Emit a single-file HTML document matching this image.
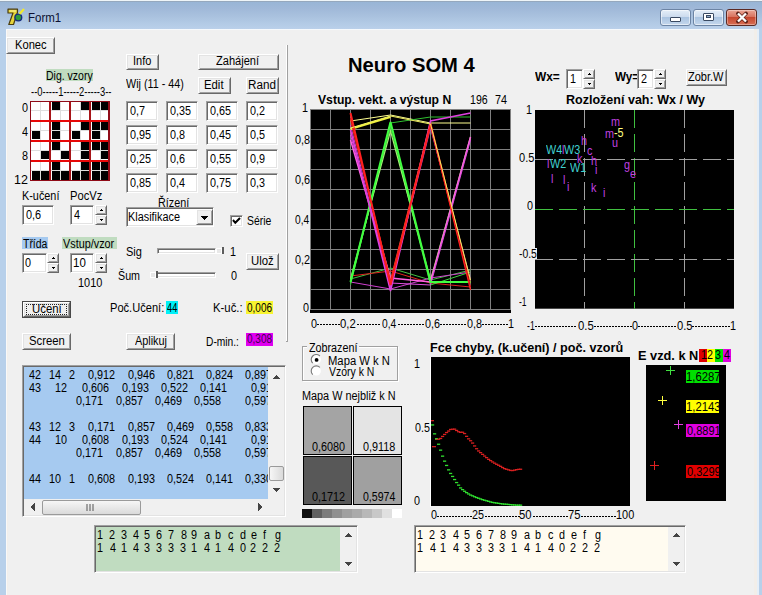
<!DOCTYPE html>
<html><head><meta charset="utf-8"><style>
html,body{margin:0;padding:0;}
body{width:762px;height:595px;overflow:hidden;position:relative;background:#b8d0ea;font-family:"Liberation Sans", sans-serif;}
.t{position:absolute;white-space:pre;color:#000;}
.b{position:absolute;box-sizing:border-box;}
.btn{position:absolute;box-sizing:border-box;background:#f0f0f0;border:1px solid;border-color:#fff #696969 #696969 #fff;box-shadow:inset 1px 1px #e3e3e3, inset -1px -1px #a0a0a0;}
.ed{position:absolute;box-sizing:border-box;border:1px solid;border-color:#a0a0a0 #fff #fff #a0a0a0;box-shadow:inset 1px 1px #696969, inset -1px -1px #e3e3e3;}
</style></head><body>
<div class="b" style="left:0px;top:0px;width:762px;height:29px;background:linear-gradient(#98b5d6 2px,#9fb8d8 8px,#a9c1de 16px,#b2cae5 23px,#bad0ea 29px)"></div>
<div class="b" style="left:0px;top:0px;width:762px;height:1px;background:#eef5f8"></div>
<div class="b" style="left:0px;top:1px;width:762px;height:1px;background:#95a8bd"></div>
<svg class="b" style="left:6px;top:8px" width="20" height="18" viewBox="0 0 20 18">
<path d="M2 1.2 L11.5 1.2 L11.5 4.2 L7.5 16.5 L2.8 16.5 L7 5 L2 5 Z" fill="#e6d43a" stroke="#4a3c10" stroke-width="1.2" stroke-linejoin="round"/>
<path d="M3.5 3 L10 3" stroke="#fff7a0" stroke-width="1"/>
<circle cx="12.3" cy="9.5" r="3.4" fill="#2f9a3a" stroke="#162a80" stroke-width="1.4"/>
<path d="M13.5 6 L18 1" stroke="#f0e830" stroke-width="2.2"/>
</svg>
<div class="t" style="left:27.52px;top:11px;font-size:13px;line-height:13px;color:#0c1030;transform:scaleX(0.8833);transform-origin:0 0;">Form1</div>
<div class="b" style="left:660px;top:9px;width:31px;height:17px;border:1px solid #6c84a4;border-radius:3px;background:linear-gradient(#e4eef8 0%,#cddcee 45%,#aac4e1 50%,#c4d7ec 100%);box-shadow:inset 0 0 0 1px rgba(255,255,255,0.55)"></div>
<div class="b" style="left:693px;top:9px;width:31px;height:17px;border:1px solid #6c84a4;border-radius:3px;background:linear-gradient(#e4eef8 0%,#cddcee 45%,#aac4e1 50%,#c4d7ec 100%);box-shadow:inset 0 0 0 1px rgba(255,255,255,0.55)"></div>
<div class="b" style="left:726px;top:9px;width:31px;height:17px;border:1px solid #5b2a24;border-radius:3px;background:linear-gradient(#eaa595 0%,#d8735f 45%,#c6472f 50%,#d86f55 100%);box-shadow:inset 0 0 0 1px rgba(255,255,255,0.35)"></div>
<div class="b" style="left:670px;top:17px;width:11px;height:5px;background:#fff;border:1px solid #3a4a62;border-radius:1px"></div>
<div class="b" style="left:703px;top:13px;width:11px;height:8px;background:#fff;border:1px solid #3a4a62;border-radius:1px"></div>
<div class="b" style="left:706px;top:15px;width:5px;height:3px;background:#8ea6c4;border:1px solid #3a4a62"></div>
<svg class="b" style="left:734px;top:11px" width="16" height="13" viewBox="0 0 16 13"><path d="M4 2.5 L12 10.5 M12 2.5 L4 10.5" stroke="#5a2018" stroke-width="3.8" stroke-linecap="round"/><path d="M4 2.5 L12 10.5 M12 2.5 L4 10.5" stroke="#fff" stroke-width="2.4"/></svg>
<div class="b" style="left:6px;top:29px;width:748px;height:566px;background:#f0f0f0"></div>
<div class="b" style="left:6px;top:29px;width:1px;height:566px;background:#f9f9f9"></div>
<div class="b" style="left:7px;top:29px;width:1px;height:566px;background:#f3efeb"></div>
<div class="b" style="left:754px;top:29px;width:3px;height:566px;background:#f2eee9"></div>
<div class="b" style="left:757px;top:29px;width:2px;height:566px;background:#e6eff8"></div>
<div class="b" style="left:6px;top:29px;width:748px;height:1px;background:#f6f9fc"></div>
<div class="btn" style="left:6px;top:37px;width:49px;height:17px"></div>
<div class="t" style="left:14.57px;top:39px;font-size:12px;line-height:12px;transform:scaleX(0.9303);transform-origin:0 0;">Konec</div>
<div class="b" style="left:46px;top:69px;width:47px;height:12px;background:#c0dcc0"></div>
<div class="t" style="left:46.12px;top:70px;font-size:12px;line-height:12px;transform:scaleX(0.8750);transform-origin:0 0;">Dig. vzory</div>
<div class="t" style="left:31.00px;top:86px;font-size:12px;line-height:12px;transform:scaleX(0.7843);transform-origin:0 0;">--0-----1-----2-----3--</div>
<div class="b" style="left:30px;top:101px;width:80px;height:80px;background:#fff"></div>
<div class="b" style="left:40px;top:102px;width:1px;height:78px;background:#dedede"></div>
<div class="b" style="left:31px;top:110px;width:77px;height:1px;background:#dedede"></div>
<div class="b" style="left:60px;top:102px;width:1px;height:78px;background:#dedede"></div>
<div class="b" style="left:31px;top:130px;width:77px;height:1px;background:#dedede"></div>
<div class="b" style="left:80px;top:102px;width:1px;height:78px;background:#dedede"></div>
<div class="b" style="left:31px;top:150px;width:77px;height:1px;background:#dedede"></div>
<div class="b" style="left:100px;top:102px;width:1px;height:78px;background:#dedede"></div>
<div class="b" style="left:31px;top:170px;width:77px;height:1px;background:#dedede"></div>
<div class="b" style="left:52px;top:102px;width:8px;height:8px;background:#000"></div>
<div class="b" style="left:81px;top:102px;width:8px;height:8px;background:#000"></div>
<div class="b" style="left:92px;top:102px;width:8px;height:8px;background:#000"></div>
<div class="b" style="left:101px;top:102px;width:7px;height:8px;background:#000"></div>
<div class="b" style="left:32px;top:131px;width:8px;height:8px;background:#000"></div>
<div class="b" style="left:52px;top:122px;width:8px;height:8px;background:#000"></div>
<div class="b" style="left:52px;top:131px;width:8px;height:8px;background:#000"></div>
<div class="b" style="left:81px;top:122px;width:8px;height:8px;background:#000"></div>
<div class="b" style="left:72px;top:131px;width:8px;height:8px;background:#000"></div>
<div class="b" style="left:92px;top:122px;width:8px;height:8px;background:#000"></div>
<div class="b" style="left:101px;top:122px;width:7px;height:8px;background:#000"></div>
<div class="b" style="left:92px;top:131px;width:8px;height:8px;background:#000"></div>
<div class="b" style="left:41px;top:151px;width:8px;height:8px;background:#000"></div>
<div class="b" style="left:52px;top:142px;width:8px;height:8px;background:#000"></div>
<div class="b" style="left:61px;top:151px;width:8px;height:8px;background:#000"></div>
<div class="b" style="left:81px;top:142px;width:8px;height:8px;background:#000"></div>
<div class="b" style="left:81px;top:151px;width:8px;height:8px;background:#000"></div>
<div class="b" style="left:92px;top:142px;width:8px;height:8px;background:#000"></div>
<div class="b" style="left:101px;top:142px;width:7px;height:8px;background:#000"></div>
<div class="b" style="left:101px;top:151px;width:7px;height:8px;background:#000"></div>
<div class="b" style="left:32px;top:171px;width:8px;height:9px;background:#000"></div>
<div class="b" style="left:41px;top:171px;width:8px;height:9px;background:#000"></div>
<div class="b" style="left:52px;top:162px;width:8px;height:8px;background:#000"></div>
<div class="b" style="left:52px;top:171px;width:8px;height:9px;background:#000"></div>
<div class="b" style="left:61px;top:171px;width:8px;height:9px;background:#000"></div>
<div class="b" style="left:81px;top:162px;width:8px;height:8px;background:#000"></div>
<div class="b" style="left:72px;top:171px;width:8px;height:9px;background:#000"></div>
<div class="b" style="left:81px;top:171px;width:8px;height:9px;background:#000"></div>
<div class="b" style="left:92px;top:162px;width:8px;height:8px;background:#000"></div>
<div class="b" style="left:101px;top:162px;width:7px;height:8px;background:#000"></div>
<div class="b" style="left:92px;top:171px;width:8px;height:9px;background:#000"></div>
<div class="b" style="left:101px;top:171px;width:7px;height:9px;background:#000"></div>
<div class="b" style="left:49px;top:101px;width:2px;height:80px;background:#a81418"></div>
<div class="b" style="left:69px;top:101px;width:2px;height:80px;background:#a81418"></div>
<div class="b" style="left:89px;top:101px;width:2px;height:80px;background:#a81418"></div>
<div class="b" style="left:30px;top:120px;width:80px;height:2px;background:#e80808"></div>
<div class="b" style="left:30px;top:140px;width:80px;height:2px;background:#e80808"></div>
<div class="b" style="left:30px;top:160px;width:80px;height:2px;background:#e80808"></div>
<div class="b" style="left:30px;top:101px;width:1px;height:80px;background:#900c18"></div>
<div class="b" style="left:30px;top:101px;width:80px;height:1px;background:#900c18"></div>
<div class="b" style="left:108px;top:101px;width:2px;height:80px;background:#900c18"></div>
<div class="b" style="left:30px;top:180px;width:80px;height:1px;background:#900c18"></div>
<div class="t" style="left:22.40px;top:102px;font-size:12px;line-height:12px;transform:scaleX(0.9);transform-origin:0 0;">0</div>
<div class="t" style="left:22.40px;top:126px;font-size:12px;line-height:12px;transform:scaleX(0.9);transform-origin:0 0;">4</div>
<div class="t" style="left:22.40px;top:150px;font-size:12px;line-height:12px;transform:scaleX(0.9);transform-origin:0 0;">8</div>
<div class="t" style="left:14.26px;top:174px;font-size:12px;line-height:12px;transform:scaleX(1.0417);transform-origin:0 0;">12</div>
<div class="t" style="left:21.70px;top:190px;font-size:12px;line-height:12px;transform:scaleX(0.9050);transform-origin:0 0;">K-učení</div>
<div class="t" style="left:69.67px;top:190px;font-size:12px;line-height:12px;transform:scaleX(0.9303);transform-origin:0 0;">PocVz</div>
<div class="ed" style="left:22px;top:205px;width:32px;height:20px;background:#fff"></div>
<div class="t" style="left:25.70px;top:209px;font-size:12px;line-height:12px;transform:scaleX(0.9062);transform-origin:0 0;">0,6</div>
<div class="ed" style="left:70px;top:205px;width:24px;height:20px;background:#fff"></div>
<div class="t" style="left:73.80px;top:209px;font-size:12px;line-height:12px;transform:scaleX(0.9);transform-origin:0 0;">4</div>
<div class="btn" style="left:95px;top:205px;width:12px;height:10px"></div>
<svg class="b" style="left:95px;top:205px" width="12" height="10"><path d="M5 5h3v1h-3z M6 4h1v1h-1z" fill="#000"/></svg>
<div class="btn" style="left:95px;top:215px;width:12px;height:10px"></div>
<svg class="b" style="left:95px;top:215px" width="12" height="10"><path d="M5 4h3v1h-3z M6 5h1v1h-1z" fill="#000"/></svg>
<div class="b" style="left:22px;top:237px;width:26px;height:12px;background:#a6caf0"></div>
<div class="t" style="left:23.40px;top:238px;font-size:12px;line-height:12px;transform:scaleX(0.8714);transform-origin:0 0;">Třída</div>
<div class="b" style="left:62px;top:237px;width:55px;height:12px;background:#c0dcc0"></div>
<div class="t" style="left:62.80px;top:238px;font-size:12px;line-height:12px;transform:scaleX(0.9035);transform-origin:0 0;">Vstup/vzor</div>
<div class="ed" style="left:22px;top:253px;width:25px;height:20px;background:#fff"></div>
<div class="t" style="left:25.30px;top:257px;font-size:12px;line-height:12px;transform:scaleX(0.9);transform-origin:0 0;">0</div>
<div class="btn" style="left:47px;top:253px;width:12px;height:10px"></div>
<svg class="b" style="left:47px;top:253px" width="12" height="10"><path d="M5 5h3v1h-3z M6 4h1v1h-1z" fill="#000"/></svg>
<div class="btn" style="left:47px;top:263px;width:12px;height:10px"></div>
<svg class="b" style="left:47px;top:263px" width="12" height="10"><path d="M5 4h3v1h-3z M6 5h1v1h-1z" fill="#000"/></svg>
<div class="ed" style="left:70px;top:253px;width:24px;height:20px;background:#fff"></div>
<div class="t" style="left:72.84px;top:257px;font-size:12px;line-height:12px;transform:scaleX(0.9583);transform-origin:0 0;">10</div>
<div class="btn" style="left:95px;top:253px;width:12px;height:10px"></div>
<svg class="b" style="left:95px;top:253px" width="12" height="10"><path d="M5 5h3v1h-3z M6 4h1v1h-1z" fill="#000"/></svg>
<div class="btn" style="left:95px;top:263px;width:12px;height:10px"></div>
<svg class="b" style="left:95px;top:263px" width="12" height="10"><path d="M5 4h3v1h-3z M6 5h1v1h-1z" fill="#000"/></svg>
<div class="t" style="left:78.39px;top:277px;font-size:12px;line-height:12px;transform:scaleX(0.9120);transform-origin:0 0;">1010</div>
<div class="b" style="left:22px;top:301px;width:49px;height:17px;background:#484848"></div>
<div class="btn" style="left:23px;top:302px;width:47px;height:15px"></div>
<div class="t" style="left:31.55px;top:303px;font-size:12px;line-height:12px;transform:scaleX(0.9500);transform-origin:0 0;">Učení</div>
<div class="b" style="left:26px;top:304px;width:41px;height:11px;border:1px dotted #222"></div>
<div class="btn" style="left:22px;top:333px;width:49px;height:17px"></div>
<div class="t" style="left:28.56px;top:335px;font-size:12px;line-height:12px;transform:scaleX(0.9417);transform-origin:0 0;">Screen</div>
<div class="btn" style="left:126px;top:54px;width:33px;height:16px"></div>
<div class="t" style="left:132.88px;top:55px;font-size:12px;line-height:12px;transform:scaleX(0.9158);transform-origin:0 0;">Info</div>
<div class="btn" style="left:198px;top:54px;width:81px;height:16px"></div>
<div class="t" style="left:216.40px;top:55px;font-size:12px;line-height:12px;transform:scaleX(0.9217);transform-origin:0 0;">Zahájení</div>
<div class="t" style="left:126.20px;top:78px;font-size:12px;line-height:12px;transform:scaleX(0.8969);transform-origin:0 0;">Wij (11 - 44)</div>
<div class="btn" style="left:198px;top:77px;width:33px;height:17px"></div>
<div class="t" style="left:203.86px;top:79px;font-size:12px;line-height:12px;transform:scaleX(0.9450);transform-origin:0 0;">Edit</div>
<div class="btn" style="left:246px;top:77px;width:33px;height:17px"></div>
<div class="t" style="left:248.43px;top:79px;font-size:12px;line-height:12px;transform:scaleX(0.9741);transform-origin:0 0;">Rand</div>
<div class="ed" style="left:126px;top:101px;width:32px;height:20px;background:#fff"></div>
<div class="t" style="left:129.70px;top:105px;font-size:12px;line-height:12px;transform:scaleX(0.9);transform-origin:0 0;">0,7</div>
<div class="ed" style="left:166px;top:101px;width:32px;height:20px;background:#fff"></div>
<div class="t" style="left:169.70px;top:105px;font-size:12px;line-height:12px;transform:scaleX(0.9);transform-origin:0 0;">0,35</div>
<div class="ed" style="left:206px;top:101px;width:32px;height:20px;background:#fff"></div>
<div class="t" style="left:209.70px;top:105px;font-size:12px;line-height:12px;transform:scaleX(0.9);transform-origin:0 0;">0,65</div>
<div class="ed" style="left:246px;top:101px;width:32px;height:20px;background:#fff"></div>
<div class="t" style="left:249.70px;top:105px;font-size:12px;line-height:12px;transform:scaleX(0.9);transform-origin:0 0;">0,2</div>
<div class="ed" style="left:126px;top:125px;width:32px;height:20px;background:#fff"></div>
<div class="t" style="left:129.70px;top:129px;font-size:12px;line-height:12px;transform:scaleX(0.9);transform-origin:0 0;">0,95</div>
<div class="ed" style="left:166px;top:125px;width:32px;height:20px;background:#fff"></div>
<div class="t" style="left:169.70px;top:129px;font-size:12px;line-height:12px;transform:scaleX(0.9);transform-origin:0 0;">0,8</div>
<div class="ed" style="left:206px;top:125px;width:32px;height:20px;background:#fff"></div>
<div class="t" style="left:209.70px;top:129px;font-size:12px;line-height:12px;transform:scaleX(0.9);transform-origin:0 0;">0,45</div>
<div class="ed" style="left:246px;top:125px;width:32px;height:20px;background:#fff"></div>
<div class="t" style="left:249.70px;top:129px;font-size:12px;line-height:12px;transform:scaleX(0.9);transform-origin:0 0;">0,5</div>
<div class="ed" style="left:126px;top:149px;width:32px;height:20px;background:#fff"></div>
<div class="t" style="left:129.70px;top:153px;font-size:12px;line-height:12px;transform:scaleX(0.9);transform-origin:0 0;">0,25</div>
<div class="ed" style="left:166px;top:149px;width:32px;height:20px;background:#fff"></div>
<div class="t" style="left:169.70px;top:153px;font-size:12px;line-height:12px;transform:scaleX(0.9);transform-origin:0 0;">0,6</div>
<div class="ed" style="left:206px;top:149px;width:32px;height:20px;background:#fff"></div>
<div class="t" style="left:209.70px;top:153px;font-size:12px;line-height:12px;transform:scaleX(0.9);transform-origin:0 0;">0,55</div>
<div class="ed" style="left:246px;top:149px;width:32px;height:20px;background:#fff"></div>
<div class="t" style="left:249.70px;top:153px;font-size:12px;line-height:12px;transform:scaleX(0.9);transform-origin:0 0;">0,9</div>
<div class="ed" style="left:126px;top:173px;width:32px;height:20px;background:#fff"></div>
<div class="t" style="left:129.70px;top:177px;font-size:12px;line-height:12px;transform:scaleX(0.9);transform-origin:0 0;">0,85</div>
<div class="ed" style="left:166px;top:173px;width:32px;height:20px;background:#fff"></div>
<div class="t" style="left:169.70px;top:177px;font-size:12px;line-height:12px;transform:scaleX(0.9);transform-origin:0 0;">0,4</div>
<div class="ed" style="left:206px;top:173px;width:32px;height:20px;background:#fff"></div>
<div class="t" style="left:209.70px;top:177px;font-size:12px;line-height:12px;transform:scaleX(0.9);transform-origin:0 0;">0,75</div>
<div class="ed" style="left:246px;top:173px;width:32px;height:20px;background:#fff"></div>
<div class="t" style="left:249.70px;top:177px;font-size:12px;line-height:12px;transform:scaleX(0.9);transform-origin:0 0;">0,3</div>
<div class="t" style="left:158.10px;top:197px;font-size:12px;line-height:12px;transform:scaleX(0.9000);transform-origin:0 0;">Řízení</div>
<div class="ed" style="left:126px;top:207px;width:88px;height:20px;background:#fff"></div>
<div class="t" style="left:128.49px;top:211px;font-size:12px;line-height:12px;transform:scaleX(0.9071);transform-origin:0 0;">Klasifikace</div>
<div class="btn" style="left:196px;top:209px;width:17px;height:16px"></div>
<svg class="b" style="left:196px;top:209px" width="17" height="16"><path d="M5 7h7v1h-7z M6 8h5v1h-5z M7 9h3v1h-3z M8 10h1v1h-1z" fill="#000"/></svg>
<div class="ed" style="left:230px;top:215px;width:13px;height:12px;background:#fff"></div>
<svg class="b" style="left:230px;top:215px" width="13" height="12"><path d="M3 5 L5.3 7.8 L10 3" stroke="#000" stroke-width="2" fill="none"/></svg>
<div class="t" style="left:247.43px;top:215px;font-size:12px;line-height:12px;transform:scaleX(0.8667);transform-origin:0 0;">Série</div>
<div class="t" style="left:125.58px;top:246px;font-size:12px;line-height:12px;transform:scaleX(0.9187);transform-origin:0 0;">Sig</div>
<div class="ed" style="left:157px;top:248px;width:59px;height:6px;background:#fff"></div>
<div class="b" style="left:216px;top:248px;width:6px;height:6px;background:#e8e8e8;border:1px solid #fff"></div>
<div class="b" style="left:222px;top:247px;width:2px;height:7px;background:#5c5c5c"></div>
<div class="t" style="left:230.10px;top:246px;font-size:12px;line-height:12px;transform:scaleX(0.9);transform-origin:0 0;">1</div>
<div class="t" style="left:118.11px;top:270px;font-size:12px;line-height:12px;transform:scaleX(0.8913);transform-origin:0 0;">Šum</div>
<div class="ed" style="left:156px;top:272px;width:60px;height:6px;background:#fff"></div>
<div class="b" style="left:150px;top:272px;width:6px;height:6px;background:#e8e8e8;border:1px solid #fff"></div>
<div class="b" style="left:156px;top:271px;width:2px;height:7px;background:#5c5c5c"></div>
<div class="t" style="left:230.50px;top:270px;font-size:12px;line-height:12px;transform:scaleX(0.9);transform-origin:0 0;">0</div>
<div class="btn" style="left:246px;top:253px;width:33px;height:17px"></div>
<div class="t" style="left:250.75px;top:255px;font-size:12px;line-height:12px;transform:scaleX(0.9478);transform-origin:0 0;">Ulož</div>
<div class="t" style="left:109.98px;top:302px;font-size:12px;line-height:12px;transform:scaleX(0.9246);transform-origin:0 0;">Poč.Učení:</div>
<div class="b" style="left:166px;top:301px;width:12px;height:13px;background:#00f0f8"></div>
<div class="t" style="left:167.00px;top:302px;font-size:12px;line-height:12px;transform:scaleX(0.7692);transform-origin:0 0;">44</div>
<div class="t" style="left:213.16px;top:302px;font-size:12px;line-height:12px;transform:scaleX(0.9448);transform-origin:0 0;">K-uč.:</div>
<div class="b" style="left:246px;top:301px;width:27px;height:13px;background:#f8f430"></div>
<div class="t" style="left:247.00px;top:302px;font-size:12px;line-height:12px;transform:scaleX(0.8333);transform-origin:0 0;">0,006</div>
<div class="btn" style="left:126px;top:333px;width:49px;height:17px"></div>
<div class="t" style="left:135.20px;top:335px;font-size:12px;line-height:12px;transform:scaleX(0.9057);transform-origin:0 0;">Aplikuj</div>
<div class="t" style="left:206.15px;top:336px;font-size:12px;line-height:12px;transform:scaleX(0.8514);transform-origin:0 0;">D-min.:</div>
<div class="b" style="left:246px;top:333px;width:27px;height:13px;background:#e000f0"></div>
<div class="t" style="left:247.00px;top:333px;font-size:12px;line-height:12px;color:#400050;transform:scaleX(0.8333);transform-origin:0 0;">0,308</div>
<div class="b" style="left:286px;top:45px;width:1px;height:297px;background:#fff"></div>
<div class="b" style="left:287px;top:45px;width:1px;height:297px;background:#a0a0a0"></div>
<div class="b" style="left:286px;top:341px;width:2px;height:1px;background:#a0a0a0"></div>
<div class="ed" style="left:22px;top:365px;width:264px;height:152px;background:#a6caf0"></div>
<div class="b" style="left:268px;top:367px;width:16px;height:132px;background:#f0f0f0"></div>
<div class="b" style="left:24px;top:499px;width:244px;height:16px;background:#f0f0f0"></div>
<div class="b" style="left:268px;top:499px;width:16px;height:16px;background:#f0f0f0"></div>
<div class="b" style="left:269px;top:466px;width:15px;height:15px;border:1px solid #9a9a9a;background:linear-gradient(90deg,#f6f6f6,#dadada);border-radius:2px"></div>
<div class="b" style="left:42px;top:500px;width:99px;height:15px;border:1px solid #9a9a9a;background:linear-gradient(#f6f6f6,#dadada);border-radius:2px"></div>
<svg class="b" style="left:86px;top:504px" width="10" height="7"><path d="M1 0v7M4 0v7M7 0v7" stroke="#555" stroke-width="1"/></svg>
<svg class="b" style="left:268px;top:367px" width="16" height="148"><path d="M5 11h7v1h-7z M6 10h5v1h-5z M7 9h3v1h-3z M8 8h1v1h-1z" fill="#444"/><path d="M5 121h7v1h-7z M6 122h5v1h-5z M7 123h3v1h-3z M8 124h1v1h-1z" fill="#444"/></svg>
<svg class="b" style="left:24px;top:499px" width="244" height="16"><path d="M10 4v8h1v-8z M9 5v6h1v-6z M8 6v4h1v-4z M7 7v2h1v-2z" fill="#444"/><path d="M234 4v8h1v-8z M235 5v6h1v-6z M236 6v4h1v-4z M237 7v2h1v-2z" fill="#444"/></svg>
<div style="position:absolute;left:24px;top:367px;width:244px;height:132px;overflow:hidden">
<div class="t" style="left:4.90px;top:2px;font-size:12px;line-height:12px;transform:scaleX(0.9);transform-origin:0 0;">42</div>
<div class="t" style="left:25.00px;top:2px;font-size:12px;line-height:12px;transform:scaleX(0.9);transform-origin:0 0;">14</div>
<div class="t" style="left:45.40px;top:2px;font-size:12px;line-height:12px;transform:scaleX(0.9);transform-origin:0 0;">2</div>
<div class="t" style="left:64.30px;top:2px;font-size:12px;line-height:12px;transform:scaleX(0.9);transform-origin:0 0;">0,912</div>
<div class="t" style="left:103.50px;top:2px;font-size:12px;line-height:12px;transform:scaleX(0.9);transform-origin:0 0;">0,946</div>
<div class="t" style="left:142.50px;top:2px;font-size:12px;line-height:12px;transform:scaleX(0.9);transform-origin:0 0;">0,821</div>
<div class="t" style="left:181.50px;top:2px;font-size:12px;line-height:12px;transform:scaleX(0.9);transform-origin:0 0;">0,824</div>
<div class="t" style="left:220.60px;top:2px;font-size:12px;line-height:12px;transform:scaleX(0.9);transform-origin:0 0;">0,897</div>
<div class="t" style="left:4.90px;top:15px;font-size:12px;line-height:12px;transform:scaleX(0.9);transform-origin:0 0;">43</div>
<div class="t" style="left:30.90px;top:15px;font-size:12px;line-height:12px;transform:scaleX(0.9);transform-origin:0 0;">12</div>
<div class="t" style="left:58.30px;top:15px;font-size:12px;line-height:12px;transform:scaleX(0.9);transform-origin:0 0;">0,606</div>
<div class="t" style="left:97.50px;top:15px;font-size:12px;line-height:12px;transform:scaleX(0.9);transform-origin:0 0;">0,193</div>
<div class="t" style="left:136.50px;top:15px;font-size:12px;line-height:12px;transform:scaleX(0.9);transform-origin:0 0;">0,522</div>
<div class="t" style="left:175.60px;top:15px;font-size:12px;line-height:12px;transform:scaleX(0.9);transform-origin:0 0;">0,141</div>
<div class="t" style="left:226.70px;top:15px;font-size:12px;line-height:12px;transform:scaleX(0.9);transform-origin:0 0;">0,91</div>
<div class="t" style="left:52.30px;top:28px;font-size:12px;line-height:12px;transform:scaleX(0.9);transform-origin:0 0;">0,171</div>
<div class="t" style="left:91.60px;top:28px;font-size:12px;line-height:12px;transform:scaleX(0.9);transform-origin:0 0;">0,857</div>
<div class="t" style="left:130.60px;top:28px;font-size:12px;line-height:12px;transform:scaleX(0.9);transform-origin:0 0;">0,469</div>
<div class="t" style="left:169.50px;top:28px;font-size:12px;line-height:12px;transform:scaleX(0.9);transform-origin:0 0;">0,558</div>
<div class="t" style="left:220.60px;top:28px;font-size:12px;line-height:12px;transform:scaleX(0.9);transform-origin:0 0;">0,597</div>
<div class="t" style="left:4.90px;top:54px;font-size:12px;line-height:12px;transform:scaleX(0.9);transform-origin:0 0;">43</div>
<div class="t" style="left:25.00px;top:54px;font-size:12px;line-height:12px;transform:scaleX(0.9);transform-origin:0 0;">12</div>
<div class="t" style="left:45.40px;top:54px;font-size:12px;line-height:12px;transform:scaleX(0.9);transform-origin:0 0;">3</div>
<div class="t" style="left:64.30px;top:54px;font-size:12px;line-height:12px;transform:scaleX(0.9);transform-origin:0 0;">0,171</div>
<div class="t" style="left:103.50px;top:54px;font-size:12px;line-height:12px;transform:scaleX(0.9);transform-origin:0 0;">0,857</div>
<div class="t" style="left:142.50px;top:54px;font-size:12px;line-height:12px;transform:scaleX(0.9);transform-origin:0 0;">0,469</div>
<div class="t" style="left:181.50px;top:54px;font-size:12px;line-height:12px;transform:scaleX(0.9);transform-origin:0 0;">0,558</div>
<div class="t" style="left:220.60px;top:54px;font-size:12px;line-height:12px;transform:scaleX(0.9);transform-origin:0 0;">0,833</div>
<div class="t" style="left:4.90px;top:67px;font-size:12px;line-height:12px;transform:scaleX(0.9);transform-origin:0 0;">44</div>
<div class="t" style="left:30.90px;top:67px;font-size:12px;line-height:12px;transform:scaleX(0.9);transform-origin:0 0;">10</div>
<div class="t" style="left:58.30px;top:67px;font-size:12px;line-height:12px;transform:scaleX(0.9);transform-origin:0 0;">0,608</div>
<div class="t" style="left:97.50px;top:67px;font-size:12px;line-height:12px;transform:scaleX(0.9);transform-origin:0 0;">0,193</div>
<div class="t" style="left:136.50px;top:67px;font-size:12px;line-height:12px;transform:scaleX(0.9);transform-origin:0 0;">0,524</div>
<div class="t" style="left:175.60px;top:67px;font-size:12px;line-height:12px;transform:scaleX(0.9);transform-origin:0 0;">0,141</div>
<div class="t" style="left:226.70px;top:67px;font-size:12px;line-height:12px;transform:scaleX(0.9);transform-origin:0 0;">0,91</div>
<div class="t" style="left:52.30px;top:80px;font-size:12px;line-height:12px;transform:scaleX(0.9);transform-origin:0 0;">0,171</div>
<div class="t" style="left:91.60px;top:80px;font-size:12px;line-height:12px;transform:scaleX(0.9);transform-origin:0 0;">0,857</div>
<div class="t" style="left:130.60px;top:80px;font-size:12px;line-height:12px;transform:scaleX(0.9);transform-origin:0 0;">0,469</div>
<div class="t" style="left:169.50px;top:80px;font-size:12px;line-height:12px;transform:scaleX(0.9);transform-origin:0 0;">0,558</div>
<div class="t" style="left:220.60px;top:80px;font-size:12px;line-height:12px;transform:scaleX(0.9);transform-origin:0 0;">0,597</div>
<div class="t" style="left:4.90px;top:106px;font-size:12px;line-height:12px;transform:scaleX(0.9);transform-origin:0 0;">44</div>
<div class="t" style="left:25.00px;top:106px;font-size:12px;line-height:12px;transform:scaleX(0.9);transform-origin:0 0;">10</div>
<div class="t" style="left:45.40px;top:106px;font-size:12px;line-height:12px;transform:scaleX(0.9);transform-origin:0 0;">1</div>
<div class="t" style="left:64.30px;top:106px;font-size:12px;line-height:12px;transform:scaleX(0.9);transform-origin:0 0;">0,608</div>
<div class="t" style="left:103.50px;top:106px;font-size:12px;line-height:12px;transform:scaleX(0.9);transform-origin:0 0;">0,193</div>
<div class="t" style="left:142.50px;top:106px;font-size:12px;line-height:12px;transform:scaleX(0.9);transform-origin:0 0;">0,524</div>
<div class="t" style="left:181.50px;top:106px;font-size:12px;line-height:12px;transform:scaleX(0.9);transform-origin:0 0;">0,141</div>
<div class="t" style="left:220.60px;top:106px;font-size:12px;line-height:12px;transform:scaleX(0.9);transform-origin:0 0;">0,330</div>
</div>
<div class="t" style="left:347.59px;top:55px;font-size:20px;line-height:20px;font-weight:bold;transform:scaleX(1.0096);transform-origin:0 0;">Neuro SOM 4</div>
<div class="t" style="left:318.30px;top:94px;font-size:12px;line-height:12px;font-weight:bold;transform:scaleX(1.0137);transform-origin:0 0;">Vstup. vekt. a výstup N</div>
<div class="t" style="left:470.42px;top:94px;font-size:12px;line-height:12px;transform:scaleX(0.8842);transform-origin:0 0;">196</div>
<div class="t" style="left:494.50px;top:94px;font-size:12px;line-height:12px;transform:scaleX(0.9000);transform-origin:0 0;">74</div>
<svg class="b" style="left:300px;top:100px" width="220" height="220" viewBox="300 100 220 220">
<rect x="310" y="109" width="201" height="204" fill="#000"/>
<line x1="310.5" y1="109" x2="310.5" y2="310" stroke="#808080" stroke-width="1"/>
<line x1="330.5" y1="109" x2="330.5" y2="310" stroke="#808080" stroke-width="1"/>
<line x1="350.5" y1="109" x2="350.5" y2="310" stroke="#808080" stroke-width="1"/>
<line x1="370.5" y1="109" x2="370.5" y2="310" stroke="#808080" stroke-width="1"/>
<line x1="390.5" y1="109" x2="390.5" y2="310" stroke="#808080" stroke-width="1"/>
<line x1="410.5" y1="109" x2="410.5" y2="310" stroke="#808080" stroke-width="1"/>
<line x1="430.5" y1="109" x2="430.5" y2="310" stroke="#808080" stroke-width="1"/>
<line x1="450.5" y1="109" x2="450.5" y2="310" stroke="#808080" stroke-width="1"/>
<line x1="470.5" y1="109" x2="470.5" y2="310" stroke="#808080" stroke-width="1"/>
<line x1="490.5" y1="109" x2="490.5" y2="310" stroke="#808080" stroke-width="1"/>
<line x1="510.5" y1="109" x2="510.5" y2="310" stroke="#808080" stroke-width="1"/>
<line x1="310" y1="109.5" x2="511" y2="109.5" stroke="#808080" stroke-width="1"/>
<line x1="310" y1="129.5" x2="511" y2="129.5" stroke="#808080" stroke-width="1"/>
<line x1="310" y1="149.5" x2="511" y2="149.5" stroke="#808080" stroke-width="1"/>
<line x1="310" y1="169.5" x2="511" y2="169.5" stroke="#808080" stroke-width="1"/>
<line x1="310" y1="189.5" x2="511" y2="189.5" stroke="#808080" stroke-width="1"/>
<line x1="310" y1="209.5" x2="511" y2="209.5" stroke="#808080" stroke-width="1"/>
<line x1="310" y1="229.5" x2="511" y2="229.5" stroke="#808080" stroke-width="1"/>
<line x1="310" y1="249.5" x2="511" y2="249.5" stroke="#808080" stroke-width="1"/>
<line x1="310" y1="269.5" x2="511" y2="269.5" stroke="#808080" stroke-width="1"/>
<line x1="310" y1="289.5" x2="511" y2="289.5" stroke="#808080" stroke-width="1"/>
<line x1="310" y1="309.5" x2="511" y2="309.5" stroke="#808080" stroke-width="1"/>
<polyline points="350.5,279 390.5,268 430.5,280 470.5,270" stroke="#40c040" stroke-width="1" fill="none"/>
<polyline points="350.5,276 390.5,271 430.5,283 470.5,287" stroke="#e02020" stroke-width="1" fill="none"/>
<polyline points="350.5,282 390.5,289 430.5,278 470.5,272" stroke="#d040d0" stroke-width="1" fill="none"/>
<polyline points="350.5,121 390.5,115 430.5,123 470.5,123" stroke="#ffff90" stroke-width="1" fill="none"/>
<polyline points="350.5,285 390.5,123 430.5,117 470.5,117" stroke="#30c030" stroke-width="1" fill="none"/>
<polyline points="350.5,283 390.5,127 430.5,285 470.5,272" stroke="#40d040" stroke-width="1" fill="none"/>
<polyline points="350.5,279 390.5,131 430.5,280 470.5,137" stroke="#a0f070" stroke-width="1.2" fill="none"/>
<polyline points="350.5,140 390.5,278 430.5,282 470.5,137" stroke="#ff60e0" stroke-width="1.5" fill="none"/>
<polyline points="350.5,135 390.5,283 430.5,285 470.5,140" stroke="#e050e0" stroke-width="1" fill="none"/>
<polyline points="350.5,125 390.5,287 430.5,128 470.5,280" stroke="#d040d0" stroke-width="1" fill="none"/>
<polyline points="350.5,129 390.5,117" stroke="#f0f040" stroke-width="2" fill="none"/>
<polyline points="350.5,120 390.5,280 430.5,122 470.5,283" stroke="#ff5030" stroke-width="1" fill="none"/>
<polyline points="350.5,282 390.5,122 430.5,282 470.5,282" stroke="#40ff40" stroke-width="2" fill="none"/>
<polyline points="350.5,118 390.5,282 430.5,126 470.5,287" stroke="#e00000" stroke-width="1" fill="none"/>
<polyline points="350.5,130 390.5,291 430.5,121 470.5,113" stroke="#e040e0" stroke-width="1.5" fill="none"/>
<polyline points="350.5,113 390.5,285 430.5,124" stroke="#ff2020" stroke-width="2" fill="none"/>
<polyline points="430.5,124 470.5,290" stroke="#ff2020" stroke-width="1.2" fill="none"/>
<polyline points="350.5,128 390.5,116 430.5,124 470.5,280" stroke="#f0f060" stroke-width="1" fill="none"/>
</svg>
<div class="t" style="left:302.10px;top:102px;font-size:12px;line-height:12px;transform:scaleX(0.9);transform-origin:0 0;">1</div>
<div class="t" style="left:294.70px;top:134px;font-size:12px;line-height:12px;transform:scaleX(0.9062);transform-origin:0 0;">0,8</div>
<div class="t" style="left:294.70px;top:174px;font-size:12px;line-height:12px;transform:scaleX(0.9062);transform-origin:0 0;">0,6</div>
<div class="t" style="left:294.70px;top:214px;font-size:12px;line-height:12px;transform:scaleX(0.8529);transform-origin:0 0;">0,4</div>
<div class="t" style="left:294.70px;top:254px;font-size:12px;line-height:12px;transform:scaleX(0.9062);transform-origin:0 0;">0,2</div>
<div class="t" style="left:303.00px;top:302px;font-size:12px;line-height:12px;transform:scaleX(0.9);transform-origin:0 0;">0</div>
<div class="t" style="left:310.80px;top:318px;font-size:12px;line-height:12px;transform:scaleX(0.9);transform-origin:0 0;">0</div>
<div class="t" style="left:340.40px;top:318px;font-size:12px;line-height:12px;transform:scaleX(0.9438);transform-origin:0 0;">0,2</div>
<div class="t" style="left:382.20px;top:318px;font-size:12px;line-height:12px;transform:scaleX(0.8529);transform-origin:0 0;">0,4</div>
<div class="t" style="left:424.50px;top:318px;font-size:12px;line-height:12px;transform:scaleX(0.9000);transform-origin:0 0;">0,6</div>
<div class="t" style="left:466.80px;top:318px;font-size:12px;line-height:12px;transform:scaleX(0.9000);transform-origin:0 0;">0,8</div>
<div class="t" style="left:508.30px;top:318px;font-size:12px;line-height:12px;transform:scaleX(0.9);transform-origin:0 0;">1</div>
<svg class="b" style="left:0;top:0" width="762" height="595" fill="#000"><rect x="317" y="324" width="2" height="1"/><rect x="320" y="324" width="2" height="1"/><rect x="323" y="324" width="2" height="1"/><rect x="326" y="324" width="2" height="1"/><rect x="329" y="324" width="2" height="1"/><rect x="332" y="324" width="2" height="1"/><rect x="335" y="324" width="2" height="1"/><rect x="338" y="324" width="2" height="1"/><rect x="357" y="324" width="2" height="1"/><rect x="360" y="324" width="2" height="1"/><rect x="363" y="324" width="2" height="1"/><rect x="366" y="324" width="2" height="1"/><rect x="369" y="324" width="2" height="1"/><rect x="372" y="324" width="2" height="1"/><rect x="375" y="324" width="2" height="1"/><rect x="378" y="324" width="2" height="1"/><rect x="398" y="324" width="2" height="1"/><rect x="401" y="324" width="2" height="1"/><rect x="404" y="324" width="2" height="1"/><rect x="407" y="324" width="2" height="1"/><rect x="410" y="324" width="2" height="1"/><rect x="413" y="324" width="2" height="1"/><rect x="416" y="324" width="2" height="1"/><rect x="419" y="324" width="2" height="1"/><rect x="422" y="324" width="2" height="1"/><rect x="440" y="324" width="2" height="1"/><rect x="443" y="324" width="2" height="1"/><rect x="446" y="324" width="2" height="1"/><rect x="449" y="324" width="2" height="1"/><rect x="452" y="324" width="2" height="1"/><rect x="455" y="324" width="2" height="1"/><rect x="458" y="324" width="2" height="1"/><rect x="461" y="324" width="2" height="1"/><rect x="464" y="324" width="2" height="1"/><rect x="482" y="324" width="2" height="1"/><rect x="485" y="324" width="2" height="1"/><rect x="488" y="324" width="2" height="1"/><rect x="491" y="324" width="2" height="1"/><rect x="494" y="324" width="2" height="1"/><rect x="497" y="324" width="2" height="1"/><rect x="500" y="324" width="2" height="1"/><rect x="503" y="324" width="2" height="1"/><rect x="506" y="324" width="2" height="1"/></svg>
<div class="t" style="left:534.60px;top:71px;font-size:12px;line-height:12px;font-weight:bold;transform:scaleX(0.9920);transform-origin:0 0;">Wx=</div>
<div class="ed" style="left:566px;top:69px;width:17px;height:20px;background:#fff"></div>
<div class="t" style="left:569.60px;top:73px;font-size:12px;line-height:12px;transform:scaleX(0.9);transform-origin:0 0;">1</div>
<div class="btn" style="left:583px;top:69px;width:12px;height:10px"></div>
<svg class="b" style="left:583px;top:69px" width="12" height="10"><path d="M5 5h3v1h-3z M6 4h1v1h-1z" fill="#000"/></svg>
<div class="btn" style="left:583px;top:79px;width:12px;height:10px"></div>
<svg class="b" style="left:583px;top:79px" width="12" height="10"><path d="M5 4h3v1h-3z M6 5h1v1h-1z" fill="#000"/></svg>
<div class="t" style="left:614.60px;top:71px;font-size:12px;line-height:12px;font-weight:bold;transform:scaleX(0.9750);transform-origin:0 0;">Wy=</div>
<div class="ed" style="left:637px;top:69px;width:17px;height:20px;background:#fff"></div>
<div class="t" style="left:641.20px;top:73px;font-size:12px;line-height:12px;transform:scaleX(0.9);transform-origin:0 0;">2</div>
<div class="btn" style="left:654px;top:69px;width:12px;height:10px"></div>
<svg class="b" style="left:654px;top:69px" width="12" height="10"><path d="M5 5h3v1h-3z M6 4h1v1h-1z" fill="#000"/></svg>
<div class="btn" style="left:654px;top:79px;width:12px;height:10px"></div>
<svg class="b" style="left:654px;top:79px" width="12" height="10"><path d="M5 4h3v1h-3z M6 5h1v1h-1z" fill="#000"/></svg>
<div class="btn" style="left:686px;top:69px;width:41px;height:17px"></div>
<div class="t" style="left:687.60px;top:71px;font-size:12px;line-height:12px;transform:scaleX(0.9179);transform-origin:0 0;">Zobr.W</div>
<div class="t" style="left:565.86px;top:94px;font-size:12px;line-height:12px;font-weight:bold;transform:scaleX(1.0439);transform-origin:0 0;">Rozložení vah: Wx / Wy</div>
<svg class="b" style="left:530px;top:100px" width="220" height="220" viewBox="530 100 220 220">
<rect x="535" y="110" width="199" height="198.7" fill="#000"/>
<line x1="584.5" y1="110" x2="584.5" y2="308.7" stroke="#a0a0a0" stroke-width="1" stroke-dasharray="18,6"/>
<line x1="684.5" y1="110" x2="684.5" y2="308.7" stroke="#a0a0a0" stroke-width="1" stroke-dasharray="18,6"/>
<line x1="634.5" y1="110" x2="634.5" y2="308.7" stroke="#40c040" stroke-width="1" stroke-dasharray="18,6"/>
<line x1="535" y1="159.5" x2="734" y2="159.5" stroke="#a0a0a0" stroke-width="1" stroke-dasharray="18,6"/>
<line x1="535" y1="259.5" x2="734" y2="259.5" stroke="#a0a0a0" stroke-width="1" stroke-dasharray="18,6"/>
<line x1="535" y1="209.5" x2="734" y2="209.5" stroke="#40c040" stroke-width="1" stroke-dasharray="18,6"/>
</svg>
<div class="t" style="left:546.00px;top:144px;font-size:12px;line-height:12px;color:#40d0d0;transform:scaleX(0.9);transform-origin:0 0;">W4</div>
<div class="t" style="left:564.30px;top:144px;font-size:12px;line-height:12px;color:#40d0d0;transform:scaleX(0.9);transform-origin:0 0;">W3</div>
<div class="t" style="left:550.00px;top:158px;font-size:12px;line-height:12px;color:#40d0d0;transform:scaleX(0.9);transform-origin:0 0;">W2</div>
<div class="t" style="left:570.00px;top:162px;font-size:12px;line-height:12px;color:#40d0d0;transform:scaleX(0.9);transform-origin:0 0;">W1</div>
<div class="t" style="left:581.00px;top:135px;font-size:12px;line-height:12px;color:#c040e0;transform:scaleX(0.9);transform-origin:0 0;">h</div>
<div class="t" style="left:586.60px;top:145px;font-size:12px;line-height:12px;color:#c040e0;transform:scaleX(0.9);transform-origin:0 0;">c</div>
<div class="t" style="left:577.00px;top:153px;font-size:12px;line-height:12px;color:#c040e0;transform:scaleX(0.9);transform-origin:0 0;">k</div>
<div class="t" style="left:591.30px;top:155px;font-size:12px;line-height:12px;color:#c040e0;transform:scaleX(0.9);transform-origin:0 0;">h</div>
<div class="t" style="left:594.50px;top:164px;font-size:12px;line-height:12px;color:#c040e0;transform:scaleX(0.9);transform-origin:0 0;">i</div>
<div class="t" style="left:611.30px;top:116px;font-size:12px;line-height:12px;color:#c040e0;transform:scaleX(0.9);transform-origin:0 0;">m</div>
<div class="t" style="left:604.90px;top:128px;font-size:12px;line-height:12px;color:#c040e0;transform:scaleX(0.9);transform-origin:0 0;">m</div>
<div class="t" style="left:613.80px;top:127px;font-size:12px;line-height:12px;color:#ffff80;transform:scaleX(0.9);transform-origin:0 0;">-5</div>
<div class="t" style="left:612.10px;top:137px;font-size:12px;line-height:12px;color:#c040e0;transform:scaleX(0.9);transform-origin:0 0;">u</div>
<div class="t" style="left:624.10px;top:159px;font-size:12px;line-height:12px;color:#c040e0;transform:scaleX(0.9);transform-origin:0 0;">g</div>
<div class="t" style="left:629.70px;top:168px;font-size:12px;line-height:12px;color:#c040e0;transform:scaleX(0.9);transform-origin:0 0;">e</div>
<div class="t" style="left:551.40px;top:173px;font-size:12px;line-height:12px;color:#c040e0;transform:scaleX(0.9);transform-origin:0 0;">l</div>
<div class="t" style="left:561.60px;top:144px;font-size:12px;line-height:12px;color:#c040e0;transform:scaleX(0.9);transform-origin:0 0;">l</div>
<div class="t" style="left:547.40px;top:158px;font-size:12px;line-height:12px;color:#c040e0;transform:scaleX(0.9);transform-origin:0 0;">l</div>
<div class="t" style="left:563.40px;top:174px;font-size:12px;line-height:12px;color:#c040e0;transform:scaleX(0.9);transform-origin:0 0;">l</div>
<div class="t" style="left:567.40px;top:181px;font-size:12px;line-height:12px;color:#c040e0;transform:scaleX(0.9);transform-origin:0 0;">i</div>
<div class="t" style="left:591.30px;top:182px;font-size:12px;line-height:12px;color:#c040e0;transform:scaleX(0.9);transform-origin:0 0;">k</div>
<div class="t" style="left:602.50px;top:187px;font-size:12px;line-height:12px;color:#c040e0;transform:scaleX(0.9);transform-origin:0 0;">i</div>
<div class="b" style="left:534px;top:248px;width:3px;height:11px;background:#f0f0f0"></div>
<div class="t" style="left:526.20px;top:104px;font-size:12px;line-height:12px;transform:scaleX(0.9);transform-origin:0 0;">1</div>
<div class="t" style="left:518.50px;top:152px;font-size:12px;line-height:12px;transform:scaleX(0.9187);transform-origin:0 0;">0.5</div>
<div class="t" style="left:526.50px;top:200px;font-size:12px;line-height:12px;transform:scaleX(0.9);transform-origin:0 0;">0</div>
<div class="t" style="left:518.80px;top:248px;font-size:12px;line-height:12px;transform:scaleX(0.8650);transform-origin:0 0;">-0.5</div>
<div class="t" style="left:518.80px;top:296px;font-size:12px;line-height:12px;transform:scaleX(0.7100);transform-origin:0 0;">-1</div>
<div class="t" style="left:527.10px;top:320px;font-size:12px;line-height:12px;transform:scaleX(0.7200);transform-origin:0 0;">-1</div>
<div class="t" style="left:577.60px;top:320px;font-size:12px;line-height:12px;transform:scaleX(0.9438);transform-origin:0 0;">0.5</div>
<div class="t" style="left:631.70px;top:320px;font-size:12px;line-height:12px;transform:scaleX(0.9);transform-origin:0 0;">0</div>
<div class="t" style="left:676.50px;top:320px;font-size:12px;line-height:12px;transform:scaleX(0.9312);transform-origin:0 0;">0.5</div>
<div class="t" style="left:730.10px;top:320px;font-size:12px;line-height:12px;transform:scaleX(0.9);transform-origin:0 0;">1</div>
<svg class="b" style="left:0;top:0" width="762" height="595" fill="#000"><rect x="535" y="326" width="2" height="1"/><rect x="538" y="326" width="2" height="1"/><rect x="541" y="326" width="2" height="1"/><rect x="544" y="326" width="2" height="1"/><rect x="547" y="326" width="2" height="1"/><rect x="550" y="326" width="2" height="1"/><rect x="553" y="326" width="2" height="1"/><rect x="556" y="326" width="2" height="1"/><rect x="559" y="326" width="2" height="1"/><rect x="562" y="326" width="2" height="1"/><rect x="565" y="326" width="2" height="1"/><rect x="568" y="326" width="2" height="1"/><rect x="571" y="326" width="2" height="1"/><rect x="574" y="326" width="2" height="1"/><rect x="594" y="326" width="2" height="1"/><rect x="597" y="326" width="2" height="1"/><rect x="600" y="326" width="2" height="1"/><rect x="603" y="326" width="2" height="1"/><rect x="606" y="326" width="2" height="1"/><rect x="609" y="326" width="2" height="1"/><rect x="612" y="326" width="2" height="1"/><rect x="615" y="326" width="2" height="1"/><rect x="618" y="326" width="2" height="1"/><rect x="621" y="326" width="2" height="1"/><rect x="624" y="326" width="2" height="1"/><rect x="627" y="326" width="2" height="1"/><rect x="630" y="326" width="2" height="1"/><rect x="638" y="326" width="2" height="1"/><rect x="641" y="326" width="2" height="1"/><rect x="644" y="326" width="2" height="1"/><rect x="647" y="326" width="2" height="1"/><rect x="650" y="326" width="2" height="1"/><rect x="653" y="326" width="2" height="1"/><rect x="656" y="326" width="2" height="1"/><rect x="659" y="326" width="2" height="1"/><rect x="662" y="326" width="2" height="1"/><rect x="665" y="326" width="2" height="1"/><rect x="668" y="326" width="2" height="1"/><rect x="671" y="326" width="2" height="1"/><rect x="674" y="326" width="2" height="1"/><rect x="692" y="326" width="2" height="1"/><rect x="695" y="326" width="2" height="1"/><rect x="698" y="326" width="2" height="1"/><rect x="701" y="326" width="2" height="1"/><rect x="704" y="326" width="2" height="1"/><rect x="707" y="326" width="2" height="1"/><rect x="710" y="326" width="2" height="1"/><rect x="713" y="326" width="2" height="1"/><rect x="716" y="326" width="2" height="1"/><rect x="719" y="326" width="2" height="1"/><rect x="722" y="326" width="2" height="1"/><rect x="725" y="326" width="2" height="1"/><rect x="728" y="326" width="2" height="1"/></svg>
<div class="b" style="left:302px;top:346px;width:96px;height:35px;border:1px solid #a0a0a0;box-shadow:1px 1px #fff, inset 1px 1px #fff"></div>
<div class="b" style="left:307px;top:340px;width:52px;height:12px;background:#f0f0f0"></div>
<div class="t" style="left:309.40px;top:342px;font-size:12px;line-height:12px;transform:scaleX(0.8963);transform-origin:0 0;">Zobrazení</div>
<svg class="b" style="left:310px;top:354px" width="14" height="24"><circle cx="6.3" cy="5.6" r="4.6" fill="#fff"/><path d="M9.90 2.00 A5 5 0 0 0 2.70 9.20" stroke="#7a7a7a" stroke-width="1.1" fill="none"/><circle cx="6.6" cy="5.8999999999999995" r="1.9" fill="#000"/><circle cx="6.3" cy="17" r="4.6" fill="#fff"/><path d="M9.90 13.40 A5 5 0 0 0 2.70 20.60" stroke="#7a7a7a" stroke-width="1.1" fill="none"/></svg>
<div class="t" style="left:327.56px;top:355px;font-size:12px;line-height:12px;transform:scaleX(0.9375);transform-origin:0 0;">Mapa W k N</div>
<div class="t" style="left:328.50px;top:366px;font-size:12px;line-height:12px;transform:scaleX(0.8725);transform-origin:0 0;">Vzory k N</div>
<div class="t" style="left:302.10px;top:390px;font-size:12px;line-height:12px;transform:scaleX(0.9049);transform-origin:0 0;">Mapa W nejbliž k N</div>
<div class="b" style="left:303px;top:406px;width:49px;height:49px;background:#a4a4a4;border:1px solid #000"></div>
<div class="t" style="left:312.40px;top:441px;font-size:12px;line-height:12px;transform:scaleX(0.9028);transform-origin:0 0;">0,6080</div>
<div class="b" style="left:353px;top:406px;width:49px;height:49px;background:#e4e4e4;border:1px solid #000"></div>
<div class="t" style="left:362.60px;top:441px;font-size:12px;line-height:12px;transform:scaleX(0.9028);transform-origin:0 0;">0,9118</div>
<div class="b" style="left:303px;top:456px;width:49px;height:49px;background:#585858;border:1px solid #000"></div>
<div class="t" style="left:312.40px;top:491px;font-size:12px;line-height:12px;transform:scaleX(0.9028);transform-origin:0 0;">0,1712</div>
<div class="b" style="left:353px;top:456px;width:49px;height:49px;background:#a0a0a0;border:1px solid #000"></div>
<div class="t" style="left:362.60px;top:491px;font-size:12px;line-height:12px;transform:scaleX(0.8784);transform-origin:0 0;">0,5974</div>
<div class="b" style="left:302px;top:509px;width:10px;height:9px;background:#101010"></div>
<div class="b" style="left:312px;top:509px;width:10px;height:9px;background:#606060"></div>
<div class="b" style="left:322px;top:509px;width:10px;height:9px;background:#7c7c7c"></div>
<div class="b" style="left:332px;top:509px;width:10px;height:9px;background:#909090"></div>
<div class="b" style="left:342px;top:509px;width:10px;height:9px;background:#a0a0a0"></div>
<div class="b" style="left:352px;top:509px;width:10px;height:9px;background:#aaaaaa"></div>
<div class="b" style="left:362px;top:509px;width:10px;height:9px;background:#b8b8b8"></div>
<div class="b" style="left:372px;top:509px;width:10px;height:9px;background:#c8c8c8"></div>
<div class="b" style="left:382px;top:509px;width:10px;height:9px;background:#e0e0e0"></div>
<div class="b" style="left:392px;top:509px;width:10px;height:9px;background:#ffffff"></div>
<div class="t" style="left:429.65px;top:342px;font-size:12px;line-height:12px;font-weight:bold;transform:scaleX(1.0505);transform-origin:0 0;">Fce chyby, (k.učení) / poč. vzorů</div>
<div class="b" style="left:430px;top:357px;width:1px;height:150px;background:#fff"></div>
<div class="b" style="left:431px;top:357px;width:199px;height:149px;background:#000"></div>
<div class="t" style="left:414.20px;top:358px;font-size:12px;line-height:12px;transform:scaleX(0.9);transform-origin:0 0;">1</div>
<div class="t" style="left:415.00px;top:422px;font-size:12px;line-height:12px;transform:scaleX(0.8938);transform-origin:0 0;">0.5</div>
<div class="t" style="left:414.40px;top:495px;font-size:12px;line-height:12px;transform:scaleX(0.9);transform-origin:0 0;">0</div>
<div class="t" style="left:430.90px;top:509px;font-size:12px;line-height:12px;transform:scaleX(0.9);transform-origin:0 0;">0</div>
<div class="t" style="left:471.90px;top:509px;font-size:12px;line-height:12px;transform:scaleX(0.9000);transform-origin:0 0;">25</div>
<div class="t" style="left:519.46px;top:509px;font-size:12px;line-height:12px;transform:scaleX(0.9417);transform-origin:0 0;">50</div>
<div class="t" style="left:568.37px;top:509px;font-size:12px;line-height:12px;transform:scaleX(0.9333);transform-origin:0 0;">75</div>
<div class="t" style="left:615.69px;top:509px;font-size:12px;line-height:12px;transform:scaleX(0.9105);transform-origin:0 0;">100</div>
<svg class="b" style="left:0;top:0" width="762" height="595" fill="#000"><rect x="437" y="516" width="2" height="1"/><rect x="440" y="516" width="2" height="1"/><rect x="443" y="516" width="2" height="1"/><rect x="446" y="516" width="2" height="1"/><rect x="449" y="516" width="2" height="1"/><rect x="452" y="516" width="2" height="1"/><rect x="455" y="516" width="2" height="1"/><rect x="458" y="516" width="2" height="1"/><rect x="461" y="516" width="2" height="1"/><rect x="464" y="516" width="2" height="1"/><rect x="467" y="516" width="2" height="1"/><rect x="470" y="516" width="2" height="1"/><rect x="485" y="516" width="2" height="1"/><rect x="488" y="516" width="2" height="1"/><rect x="491" y="516" width="2" height="1"/><rect x="494" y="516" width="2" height="1"/><rect x="497" y="516" width="2" height="1"/><rect x="500" y="516" width="2" height="1"/><rect x="503" y="516" width="2" height="1"/><rect x="506" y="516" width="2" height="1"/><rect x="509" y="516" width="2" height="1"/><rect x="512" y="516" width="2" height="1"/><rect x="515" y="516" width="2" height="1"/><rect x="518" y="516" width="2" height="1"/><rect x="533" y="516" width="2" height="1"/><rect x="536" y="516" width="2" height="1"/><rect x="539" y="516" width="2" height="1"/><rect x="542" y="516" width="2" height="1"/><rect x="545" y="516" width="2" height="1"/><rect x="548" y="516" width="2" height="1"/><rect x="551" y="516" width="2" height="1"/><rect x="554" y="516" width="2" height="1"/><rect x="557" y="516" width="2" height="1"/><rect x="560" y="516" width="2" height="1"/><rect x="563" y="516" width="2" height="1"/><rect x="566" y="516" width="2" height="1"/><rect x="581" y="516" width="2" height="1"/><rect x="584" y="516" width="2" height="1"/><rect x="587" y="516" width="2" height="1"/><rect x="590" y="516" width="2" height="1"/><rect x="593" y="516" width="2" height="1"/><rect x="596" y="516" width="2" height="1"/><rect x="599" y="516" width="2" height="1"/><rect x="602" y="516" width="2" height="1"/><rect x="605" y="516" width="2" height="1"/><rect x="608" y="516" width="2" height="1"/><rect x="611" y="516" width="2" height="1"/><rect x="614" y="516" width="2" height="1"/></svg>
<svg class="b" style="left:431px;top:357px" width="199" height="149" viewBox="431 357 199 149">
<rect x="431" y="420" width="3" height="1.3" fill="#d02020"/>
<rect x="432" y="446" width="4" height="1.3" fill="#d02020"/>
<rect x="431" y="424.3" width="3.2" height="1.3" fill="#30e030"/>
<rect x="433" y="433.2" width="3.2" height="1.3" fill="#30e030"/>
<rect x="435" y="438.6" width="3.2" height="1.3" fill="#d82020"/>
<rect x="435" y="438.1" width="3.2" height="1.3" fill="#30e030"/>
<rect x="437" y="438.6" width="3.2" height="1.3" fill="#d82020"/>
<rect x="437" y="443.6" width="3.2" height="1.3" fill="#30e030"/>
<rect x="439" y="437.8" width="3.2" height="1.3" fill="#d82020"/>
<rect x="439" y="449.5" width="3.2" height="1.3" fill="#30e030"/>
<rect x="441" y="435.8" width="3.2" height="1.3" fill="#d82020"/>
<rect x="441" y="455.5" width="3.2" height="1.3" fill="#30e030"/>
<rect x="443" y="433.8" width="3.2" height="1.3" fill="#d82020"/>
<rect x="443" y="460.5" width="3.2" height="1.3" fill="#30e030"/>
<rect x="445" y="431.9" width="3.2" height="1.3" fill="#d82020"/>
<rect x="445" y="464.8" width="3.2" height="1.3" fill="#30e030"/>
<rect x="447" y="430.4" width="3.2" height="1.3" fill="#d82020"/>
<rect x="447" y="469.2" width="3.2" height="1.3" fill="#30e030"/>
<rect x="449" y="428.8" width="3.2" height="1.3" fill="#d82020"/>
<rect x="449" y="472.8" width="3.2" height="1.3" fill="#30e030"/>
<rect x="451" y="428.6" width="3.2" height="1.3" fill="#d82020"/>
<rect x="451" y="475.8" width="3.2" height="1.3" fill="#30e030"/>
<rect x="453" y="428.5" width="3.2" height="1.3" fill="#d82020"/>
<rect x="453" y="478.9" width="3.2" height="1.3" fill="#30e030"/>
<rect x="455" y="429.8" width="3.2" height="1.3" fill="#d82020"/>
<rect x="455" y="481.9" width="3.2" height="1.3" fill="#30e030"/>
<rect x="457" y="431.1" width="3.2" height="1.3" fill="#d82020"/>
<rect x="457" y="484.5" width="3.2" height="1.3" fill="#30e030"/>
<rect x="459" y="431.7" width="3.2" height="1.3" fill="#d82020"/>
<rect x="459" y="487.3" width="3.2" height="1.3" fill="#30e030"/>
<rect x="461" y="431.6" width="3.2" height="1.3" fill="#d82020"/>
<rect x="461" y="489.0" width="3.2" height="1.3" fill="#30e030"/>
<rect x="463" y="432.9" width="3.2" height="1.3" fill="#d82020"/>
<rect x="463" y="490.6" width="3.2" height="1.3" fill="#30e030"/>
<rect x="465" y="435.7" width="3.2" height="1.3" fill="#d82020"/>
<rect x="465" y="492.0" width="3.2" height="1.3" fill="#30e030"/>
<rect x="467" y="438.2" width="3.2" height="1.3" fill="#d82020"/>
<rect x="467" y="493.3" width="3.2" height="1.3" fill="#30e030"/>
<rect x="469" y="440.1" width="3.2" height="1.3" fill="#d82020"/>
<rect x="469" y="494.4" width="3.2" height="1.3" fill="#30e030"/>
<rect x="471" y="442.4" width="3.2" height="1.3" fill="#d82020"/>
<rect x="471" y="495.2" width="3.2" height="1.3" fill="#30e030"/>
<rect x="473" y="445.3" width="3.2" height="1.3" fill="#d82020"/>
<rect x="473" y="496.1" width="3.2" height="1.3" fill="#30e030"/>
<rect x="475" y="448.1" width="3.2" height="1.3" fill="#d82020"/>
<rect x="475" y="496.9" width="3.2" height="1.3" fill="#30e030"/>
<rect x="477" y="450.3" width="3.2" height="1.3" fill="#d82020"/>
<rect x="477" y="497.6" width="3.2" height="1.3" fill="#30e030"/>
<rect x="479" y="452.0" width="3.2" height="1.3" fill="#d82020"/>
<rect x="479" y="498.3" width="3.2" height="1.3" fill="#30e030"/>
<rect x="481" y="453.7" width="3.2" height="1.3" fill="#d82020"/>
<rect x="481" y="499.0" width="3.2" height="1.3" fill="#30e030"/>
<rect x="483" y="455.4" width="3.2" height="1.3" fill="#d82020"/>
<rect x="483" y="499.6" width="3.2" height="1.3" fill="#30e030"/>
<rect x="485" y="457.0" width="3.2" height="1.3" fill="#d82020"/>
<rect x="485" y="500.1" width="3.2" height="1.3" fill="#30e030"/>
<rect x="487" y="458.7" width="3.2" height="1.3" fill="#d82020"/>
<rect x="487" y="500.7" width="3.2" height="1.3" fill="#30e030"/>
<rect x="489" y="460.0" width="3.2" height="1.3" fill="#d82020"/>
<rect x="489" y="501.3" width="3.2" height="1.3" fill="#30e030"/>
<rect x="491" y="461.3" width="3.2" height="1.3" fill="#d82020"/>
<rect x="491" y="501.8" width="3.2" height="1.3" fill="#30e030"/>
<rect x="493" y="462.5" width="3.2" height="1.3" fill="#d82020"/>
<rect x="493" y="502.1" width="3.2" height="1.3" fill="#30e030"/>
<rect x="495" y="463.6" width="3.2" height="1.3" fill="#d82020"/>
<rect x="495" y="502.4" width="3.2" height="1.3" fill="#30e030"/>
<rect x="497" y="464.6" width="3.2" height="1.3" fill="#d82020"/>
<rect x="497" y="502.7" width="3.2" height="1.3" fill="#30e030"/>
<rect x="499" y="465.7" width="3.2" height="1.3" fill="#d82020"/>
<rect x="499" y="503.0" width="3.2" height="1.3" fill="#30e030"/>
<rect x="501" y="466.9" width="3.2" height="1.3" fill="#d82020"/>
<rect x="501" y="503.3" width="3.2" height="1.3" fill="#30e030"/>
<rect x="503" y="468.0" width="3.2" height="1.3" fill="#d82020"/>
<rect x="503" y="503.5" width="3.2" height="1.3" fill="#30e030"/>
<rect x="505" y="468.6" width="3.2" height="1.3" fill="#d82020"/>
<rect x="505" y="503.6" width="3.2" height="1.3" fill="#30e030"/>
<rect x="507" y="469.2" width="3.2" height="1.3" fill="#d82020"/>
<rect x="507" y="503.8" width="3.2" height="1.3" fill="#30e030"/>
<rect x="509" y="469.8" width="3.2" height="1.3" fill="#d82020"/>
<rect x="509" y="504.0" width="3.2" height="1.3" fill="#30e030"/>
<rect x="511" y="469.9" width="3.2" height="1.3" fill="#d82020"/>
<rect x="511" y="504.2" width="3.2" height="1.3" fill="#30e030"/>
<rect x="513" y="469.5" width="3.2" height="1.3" fill="#d82020"/>
<rect x="513" y="504.3" width="3.2" height="1.3" fill="#30e030"/>
<rect x="515" y="469.0" width="3.2" height="1.3" fill="#d82020"/>
<rect x="515" y="504.5" width="3.2" height="1.3" fill="#30e030"/>
<rect x="517" y="468.7" width="3.2" height="1.3" fill="#d82020"/>
<rect x="517" y="504.5" width="3.2" height="1.3" fill="#30e030"/>
<rect x="519" y="468.6" width="3.2" height="1.3" fill="#d82020"/>
<rect x="519" y="504.5" width="3.2" height="1.3" fill="#30e030"/>
</svg>
<div class="t" style="left:637.94px;top:350px;font-size:12px;line-height:12px;font-weight:bold;transform:scaleX(1.0636);transform-origin:0 0;">E vzd. k N</div>
<div class="b" style="left:699px;top:349px;width:8px;height:13px;background:#e00000"></div>
<div class="t" style="left:700.60px;top:349px;font-size:12px;line-height:12px;transform:scaleX(0.9);transform-origin:0 0;">1</div>
<div class="b" style="left:707px;top:349px;width:8px;height:13px;background:#ffff00"></div>
<div class="t" style="left:707.10px;top:349px;font-size:12px;line-height:12px;transform:scaleX(0.9);transform-origin:0 0;">2</div>
<div class="b" style="left:715px;top:349px;width:8px;height:13px;background:#00e000"></div>
<div class="t" style="left:714.80px;top:349px;font-size:12px;line-height:12px;transform:scaleX(0.9);transform-origin:0 0;">3</div>
<div class="b" style="left:723px;top:349px;width:8px;height:13px;background:#e000e0"></div>
<div class="t" style="left:723.70px;top:349px;font-size:12px;line-height:12px;transform:scaleX(0.9);transform-origin:0 0;">4</div>
<div class="b" style="left:646px;top:365px;width:80px;height:136px;background:#000"></div>
<svg class="b" style="left:666px;top:366px" width="9" height="9"><path d="M4.5 0 V9 M0 4.5 H9" stroke="#40e040" stroke-width="1"/></svg>
<div class="b" style="left:686px;top:370px;width:33px;height:13px;background:#00e000"></div>
<div style="position:absolute;left:686px;top:370px;width:33px;height:13px;overflow:hidden">
<div class="t" style="left:0.06px;top:1px;font-size:12px;line-height:12px;transform:scaleX(0.9429);transform-origin:0 0;">1,6287</div>
</div>
<svg class="b" style="left:658px;top:396px" width="9" height="9"><path d="M4.5 0 V9 M0 4.5 H9" stroke="#ffff40" stroke-width="1"/></svg>
<div class="b" style="left:686px;top:400px;width:33px;height:13px;background:#ffff00"></div>
<div style="position:absolute;left:686px;top:400px;width:33px;height:13px;overflow:hidden">
<div class="t" style="left:0.06px;top:1px;font-size:12px;line-height:12px;transform:scaleX(0.9429);transform-origin:0 0;">1,2143</div>
</div>
<svg class="b" style="left:674px;top:420px" width="9" height="9"><path d="M4.5 0 V9 M0 4.5 H9" stroke="#e040e0" stroke-width="1"/></svg>
<div class="b" style="left:686px;top:424px;width:33px;height:13px;background:#e000e0"></div>
<div style="position:absolute;left:686px;top:424px;width:33px;height:13px;overflow:hidden">
<div class="t" style="left:1.00px;top:1px;font-size:12px;line-height:12px;transform:scaleX(0.9167);transform-origin:0 0;">0,8891</div>
</div>
<svg class="b" style="left:650px;top:461px" width="9" height="9"><path d="M4.5 0 V9 M0 4.5 H9" stroke="#e02020" stroke-width="1"/></svg>
<div class="b" style="left:686px;top:465px;width:33px;height:13px;background:#e00000"></div>
<div style="position:absolute;left:686px;top:465px;width:33px;height:13px;overflow:hidden">
<div class="t" style="left:1.00px;top:1px;font-size:12px;line-height:12px;transform:scaleX(0.9167);transform-origin:0 0;">0,3299</div>
</div>
<div class="ed" style="left:94px;top:525px;width:264px;height:48px;background:#c0dcc0"></div>
<div class="b" style="left:340px;top:527px;width:16px;height:44px;background:#f0f0f0"></div>
<svg class="b" style="left:340px;top:527px" width="16" height="44"><path d="M5 9h7v1h-7z M6 8h5v1h-5z M7 7h3v1h-3z M8 6h1v1h-1z" fill="#444"/><path d="M5 35h7v1h-7z M6 36h5v1h-5z M7 37h3v1h-3z M8 38h1v1h-1z" fill="#444"/></svg>
<div class="t" style="left:97.00px;top:529px;font-size:12px;line-height:12px;transform:scaleX(0.9);transform-origin:0 0;">1</div>
<div class="t" style="left:108.80px;top:529px;font-size:12px;line-height:12px;transform:scaleX(0.9);transform-origin:0 0;">2</div>
<div class="t" style="left:120.60px;top:529px;font-size:12px;line-height:12px;transform:scaleX(0.9);transform-origin:0 0;">3</div>
<div class="t" style="left:133.30px;top:529px;font-size:12px;line-height:12px;transform:scaleX(0.9);transform-origin:0 0;">4</div>
<div class="t" style="left:144.20px;top:529px;font-size:12px;line-height:12px;transform:scaleX(0.9);transform-origin:0 0;">5</div>
<div class="t" style="left:156.00px;top:529px;font-size:12px;line-height:12px;transform:scaleX(0.9);transform-origin:0 0;">6</div>
<div class="t" style="left:167.80px;top:529px;font-size:12px;line-height:12px;transform:scaleX(0.9);transform-origin:0 0;">7</div>
<div class="t" style="left:180.50px;top:529px;font-size:12px;line-height:12px;transform:scaleX(0.9);transform-origin:0 0;">8</div>
<div class="t" style="left:191.40px;top:529px;font-size:12px;line-height:12px;transform:scaleX(0.9);transform-origin:0 0;">9</div>
<div class="t" style="left:204.10px;top:529px;font-size:12px;line-height:12px;transform:scaleX(0.9);transform-origin:0 0;">a</div>
<div class="t" style="left:215.00px;top:529px;font-size:12px;line-height:12px;transform:scaleX(0.9);transform-origin:0 0;">b</div>
<div class="t" style="left:227.70px;top:529px;font-size:12px;line-height:12px;transform:scaleX(0.9);transform-origin:0 0;">c</div>
<div class="t" style="left:239.50px;top:529px;font-size:12px;line-height:12px;transform:scaleX(0.9);transform-origin:0 0;">d</div>
<div class="t" style="left:251.30px;top:529px;font-size:12px;line-height:12px;transform:scaleX(0.9);transform-origin:0 0;">e</div>
<div class="t" style="left:263.10px;top:529px;font-size:12px;line-height:12px;transform:scaleX(0.9);transform-origin:0 0;">f</div>
<div class="t" style="left:274.90px;top:529px;font-size:12px;line-height:12px;transform:scaleX(0.9);transform-origin:0 0;">g</div>
<div class="t" style="left:97.00px;top:542px;font-size:12px;line-height:12px;transform:scaleX(0.9);transform-origin:0 0;">1</div>
<div class="t" style="left:109.70px;top:542px;font-size:12px;line-height:12px;transform:scaleX(0.9);transform-origin:0 0;">4</div>
<div class="t" style="left:120.60px;top:542px;font-size:12px;line-height:12px;transform:scaleX(0.9);transform-origin:0 0;">1</div>
<div class="t" style="left:133.30px;top:542px;font-size:12px;line-height:12px;transform:scaleX(0.9);transform-origin:0 0;">4</div>
<div class="t" style="left:144.20px;top:542px;font-size:12px;line-height:12px;transform:scaleX(0.9);transform-origin:0 0;">3</div>
<div class="t" style="left:156.00px;top:542px;font-size:12px;line-height:12px;transform:scaleX(0.9);transform-origin:0 0;">3</div>
<div class="t" style="left:167.80px;top:542px;font-size:12px;line-height:12px;transform:scaleX(0.9);transform-origin:0 0;">3</div>
<div class="t" style="left:179.60px;top:542px;font-size:12px;line-height:12px;transform:scaleX(0.9);transform-origin:0 0;">3</div>
<div class="t" style="left:191.40px;top:542px;font-size:12px;line-height:12px;transform:scaleX(0.9);transform-origin:0 0;">1</div>
<div class="t" style="left:204.10px;top:542px;font-size:12px;line-height:12px;transform:scaleX(0.9);transform-origin:0 0;">4</div>
<div class="t" style="left:215.00px;top:542px;font-size:12px;line-height:12px;transform:scaleX(0.9);transform-origin:0 0;">1</div>
<div class="t" style="left:227.70px;top:542px;font-size:12px;line-height:12px;transform:scaleX(0.9);transform-origin:0 0;">4</div>
<div class="t" style="left:239.50px;top:542px;font-size:12px;line-height:12px;transform:scaleX(0.9);transform-origin:0 0;">0</div>
<div class="t" style="left:250.40px;top:542px;font-size:12px;line-height:12px;transform:scaleX(0.9);transform-origin:0 0;">2</div>
<div class="t" style="left:262.20px;top:542px;font-size:12px;line-height:12px;transform:scaleX(0.9);transform-origin:0 0;">2</div>
<div class="t" style="left:274.00px;top:542px;font-size:12px;line-height:12px;transform:scaleX(0.9);transform-origin:0 0;">2</div>
<div class="ed" style="left:414px;top:525px;width:272px;height:48px;background:#fffbf0"></div>
<div class="b" style="left:668px;top:527px;width:16px;height:44px;background:#f0f0f0"></div>
<svg class="b" style="left:668px;top:527px" width="16" height="44"><path d="M5 9h7v1h-7z M6 8h5v1h-5z M7 7h3v1h-3z M8 6h1v1h-1z" fill="#444"/><path d="M5 35h7v1h-7z M6 36h5v1h-5z M7 37h3v1h-3z M8 38h1v1h-1z" fill="#444"/></svg>
<div class="t" style="left:416.80px;top:529px;font-size:12px;line-height:12px;transform:scaleX(0.9);transform-origin:0 0;">1</div>
<div class="t" style="left:428.60px;top:529px;font-size:12px;line-height:12px;transform:scaleX(0.9);transform-origin:0 0;">2</div>
<div class="t" style="left:440.40px;top:529px;font-size:12px;line-height:12px;transform:scaleX(0.9);transform-origin:0 0;">3</div>
<div class="t" style="left:453.10px;top:529px;font-size:12px;line-height:12px;transform:scaleX(0.9);transform-origin:0 0;">4</div>
<div class="t" style="left:464.00px;top:529px;font-size:12px;line-height:12px;transform:scaleX(0.9);transform-origin:0 0;">5</div>
<div class="t" style="left:475.80px;top:529px;font-size:12px;line-height:12px;transform:scaleX(0.9);transform-origin:0 0;">6</div>
<div class="t" style="left:487.60px;top:529px;font-size:12px;line-height:12px;transform:scaleX(0.9);transform-origin:0 0;">7</div>
<div class="t" style="left:500.30px;top:529px;font-size:12px;line-height:12px;transform:scaleX(0.9);transform-origin:0 0;">8</div>
<div class="t" style="left:511.20px;top:529px;font-size:12px;line-height:12px;transform:scaleX(0.9);transform-origin:0 0;">9</div>
<div class="t" style="left:523.90px;top:529px;font-size:12px;line-height:12px;transform:scaleX(0.9);transform-origin:0 0;">a</div>
<div class="t" style="left:534.80px;top:529px;font-size:12px;line-height:12px;transform:scaleX(0.9);transform-origin:0 0;">b</div>
<div class="t" style="left:547.50px;top:529px;font-size:12px;line-height:12px;transform:scaleX(0.9);transform-origin:0 0;">c</div>
<div class="t" style="left:559.30px;top:529px;font-size:12px;line-height:12px;transform:scaleX(0.9);transform-origin:0 0;">d</div>
<div class="t" style="left:571.10px;top:529px;font-size:12px;line-height:12px;transform:scaleX(0.9);transform-origin:0 0;">e</div>
<div class="t" style="left:582.90px;top:529px;font-size:12px;line-height:12px;transform:scaleX(0.9);transform-origin:0 0;">f</div>
<div class="t" style="left:594.70px;top:529px;font-size:12px;line-height:12px;transform:scaleX(0.9);transform-origin:0 0;">g</div>
<div class="t" style="left:416.80px;top:542px;font-size:12px;line-height:12px;transform:scaleX(0.9);transform-origin:0 0;">1</div>
<div class="t" style="left:429.50px;top:542px;font-size:12px;line-height:12px;transform:scaleX(0.9);transform-origin:0 0;">4</div>
<div class="t" style="left:440.40px;top:542px;font-size:12px;line-height:12px;transform:scaleX(0.9);transform-origin:0 0;">1</div>
<div class="t" style="left:453.10px;top:542px;font-size:12px;line-height:12px;transform:scaleX(0.9);transform-origin:0 0;">4</div>
<div class="t" style="left:464.00px;top:542px;font-size:12px;line-height:12px;transform:scaleX(0.9);transform-origin:0 0;">3</div>
<div class="t" style="left:475.80px;top:542px;font-size:12px;line-height:12px;transform:scaleX(0.9);transform-origin:0 0;">3</div>
<div class="t" style="left:487.60px;top:542px;font-size:12px;line-height:12px;transform:scaleX(0.9);transform-origin:0 0;">3</div>
<div class="t" style="left:499.40px;top:542px;font-size:12px;line-height:12px;transform:scaleX(0.9);transform-origin:0 0;">3</div>
<div class="t" style="left:511.20px;top:542px;font-size:12px;line-height:12px;transform:scaleX(0.9);transform-origin:0 0;">1</div>
<div class="t" style="left:523.90px;top:542px;font-size:12px;line-height:12px;transform:scaleX(0.9);transform-origin:0 0;">4</div>
<div class="t" style="left:534.80px;top:542px;font-size:12px;line-height:12px;transform:scaleX(0.9);transform-origin:0 0;">1</div>
<div class="t" style="left:547.50px;top:542px;font-size:12px;line-height:12px;transform:scaleX(0.9);transform-origin:0 0;">4</div>
<div class="t" style="left:559.30px;top:542px;font-size:12px;line-height:12px;transform:scaleX(0.9);transform-origin:0 0;">0</div>
<div class="t" style="left:570.20px;top:542px;font-size:12px;line-height:12px;transform:scaleX(0.9);transform-origin:0 0;">2</div>
<div class="t" style="left:582.00px;top:542px;font-size:12px;line-height:12px;transform:scaleX(0.9);transform-origin:0 0;">2</div>
<div class="t" style="left:593.80px;top:542px;font-size:12px;line-height:12px;transform:scaleX(0.9);transform-origin:0 0;">2</div>
</body></html>
